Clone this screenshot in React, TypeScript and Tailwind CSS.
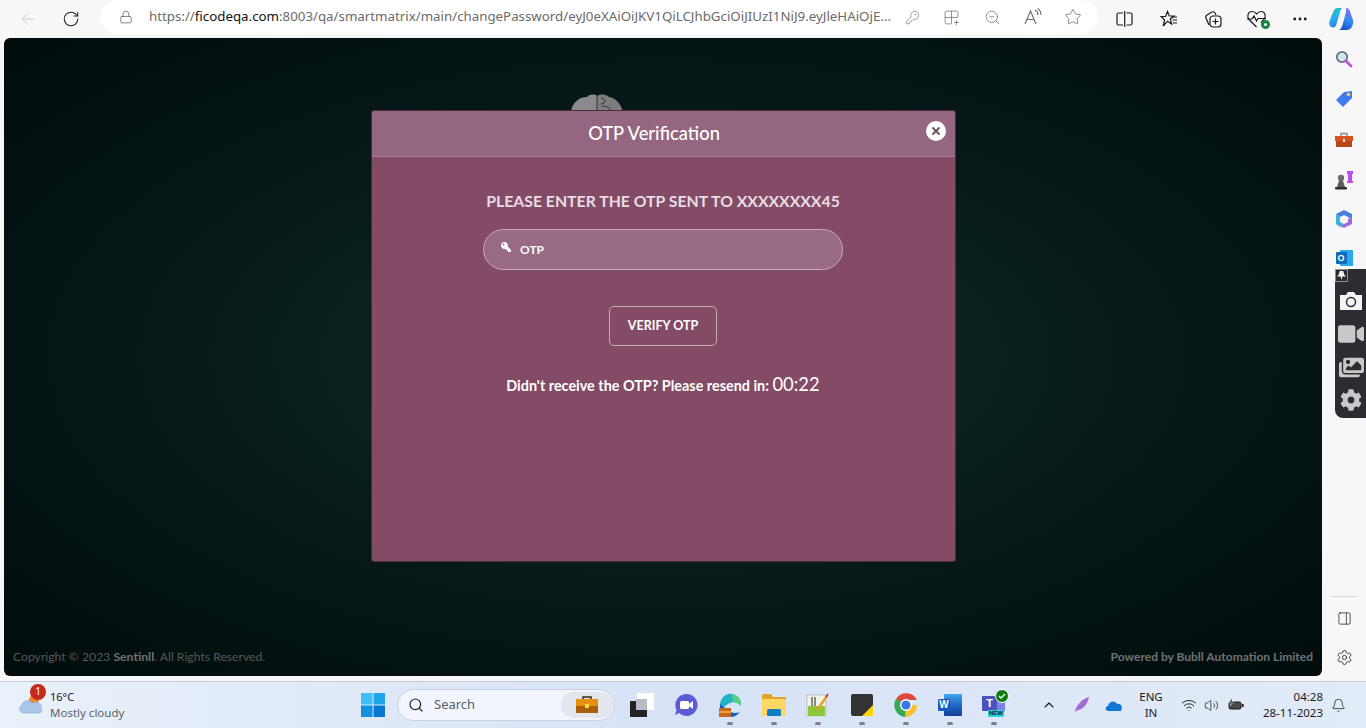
import type { ReactNode } from 'react';
import {
  ArrowLeft, RotateCw, Lock, KeyRound, Grid2x2Plus, ZoomOut, Star, MoreHorizontal,
  Settings, Bell, ChevronUp, Wifi, Volume2, Search, PanelRight, X,
} from 'lucide-react';
import { FaKey, FaVideo, FaImages, FaCog } from 'react-icons/fa';

// Browser toolbar icons on the right side of the address bar
function ReadAloudIcon() {
  return (
    <svg width="20" height="20" viewBox="0 0 20 20" fill="none" stroke="#6b6b6b" strokeWidth="1.1">
      <path d="M2 17 L7.5 4 L13 17 M4 12.5 H11" />
      <path d="M12 3 C14 4 15 5.5 15 8 M14.5 1.5 C17 3 18 5 18 8" />
    </svg>
  );
}

function SplitScreenIcon() {
  return (
    <svg width="17" height="18" viewBox="0 0 17 18" fill="none" stroke="#1a1a1a" strokeWidth="1.2">
      <path d="M7 3 H2.5 Q1 3 1 4.5 V13.5 Q1 15 2.5 15 H7 M10.5 3 H14.5 Q16 3 16 4.5 V13.5 Q16 15 14.5 15 H10.5 M8.7 1 V17" />
    </svg>
  );
}

function FavoritesIcon() {
  return (
    <svg width="18" height="18" viewBox="0 0 18 18" fill="none" stroke="#1a1a1a" strokeWidth="1.2">
      <path d="M7.5 1.5 L9.3 6 H14 L10.3 9 L11.6 14 L7.5 11.2 L3.2 16 L4.6 10 L1 6.5 H5.6 Z" />
      <path d="M11.5 7 H17 M12.5 10 H17 M12.8 13 H17" />
    </svg>
  );
}

function CollectionsIcon() {
  return (
    <svg width="18" height="18" viewBox="0 0 18 18" fill="none" stroke="#1a1a1a" strokeWidth="1.2">
      <path d="M5 15 L2 8 Q1.2 6 3 5 L8 2 Q10 1.2 11 3 L12 5" />
      <rect x="6" y="6" width="11" height="11" rx="3" />
      <path d="M11.5 8.5 V14.5 M8.5 11.5 H14.5" />
    </svg>
  );
}

function CopilotIcon() {
  return (
    <svg width="26" height="26" viewBox="0 0 26 26">
      <defs>
        <linearGradient id="copilot-left" x1="0" y1="0" x2="0.4" y2="1">
          <stop offset="0" stopColor="#1fc4a8" />
          <stop offset="0.55" stopColor="#2bb0ee" />
          <stop offset="1" stopColor="#2b7fe8" />
        </linearGradient>
        <linearGradient id="copilot-right" x1="0.7" y1="0" x2="0.3" y2="1">
          <stop offset="0" stopColor="#8a6cf0" />
          <stop offset="0.5" stopColor="#2f8cf0" />
          <stop offset="1" stopColor="#1f49c7" />
        </linearGradient>
      </defs>
      <path d="M10 2 H14.5 C13 2.5 12.5 4 12 6 L8.5 18 C8 20 7 21.5 5 21.5 C2 21.5 0.5 18 1.5 15 L5.5 5 C6.5 3 8 2 10 2 Z" fill="url(#copilot-left)" />
      <path d="M18 2 C20 2 21.5 3.5 22 5.5 L25 14 C26 18 23.5 24 19 24 H10 C12.5 24 13.5 22 14.5 19 L17.5 8 C18 6 18.5 3.5 18 2 Z" fill="url(#copilot-right)" />
    </svg>
  );
}

function BrowserEssentialsIcon() {
  return (
    <div className="relative h-5 w-6">
      <svg width="22" height="20" viewBox="0 0 22 20" fill="none" stroke="#1a1a1a" strokeWidth="1.2">
        <path d="M10.5 18 L3 10.5 C0.5 7.5 2 2.5 6 2.5 C8 2.5 9.5 3.5 10.5 5 C11.5 3.5 13 2.5 15 2.5 C19 2.5 20.5 7.5 18 10.5 L15 13.5" />
        <path d="M1 10 H6 L8 7 L10.5 12 L12 9.5 H20" />
      </svg>
      <span className="absolute bottom-0 right-0 flex h-[9px] w-[9px] items-center justify-center rounded-full bg-[#16863a]">
        <span className="h-[3px] w-[3px] rounded-full bg-white" />
      </span>
    </div>
  );
}

function TopBar() {
  return (
    <div className="flex h-[38px] shrink-0 items-center bg-[#f7f7f7] font-['Noto_Sans','Open_Sans',sans-serif]">
      <div className="flex w-[100px] shrink-0 items-center">
        <ArrowLeft className="ml-[18px] text-[#c6c6c6]" size={20} strokeWidth={1} />
        <RotateCw className="ml-[24px] text-[#222]" size={18} strokeWidth={1.4} />
      </div>
      <div className="flex h-[34px] w-[998px] shrink-0 -translate-y-[2px] items-center rounded-[17px] bg-white pl-[19px]">
        <Lock className="shrink-0 text-[#555]" size={14} strokeWidth={1.2} />
        <div className="ml-[16px] w-[748px] shrink-0 overflow-hidden whitespace-nowrap text-[13.3px] text-[#6b6b6b]">
          https://<span className="text-[#111]">ficodeqa.com</span>:8003/qa/smartmatrix/main/changePassword/eyJ0eXAiOiJKV1QiLCJhbGciOiJIUzI1NiJ9.eyJleHAiOjE...
        </div>
        <div className="flex items-center">
          <KeyRound className="ml-[8px] text-[#777]" size={15} strokeWidth={1.1} />
          <Grid2x2Plus className="ml-[23px] text-[#666]" size={17} strokeWidth={1} />
          <ZoomOut className="ml-[24px] text-[#666]" size={17} strokeWidth={1} />
          <span className="ml-[22px] flex"><ReadAloudIcon /></span>
          <Star className="ml-[21px] text-[#666]" size={18} strokeWidth={1} />
        </div>
      </div>
      <div className="flex items-center">
        <span className="ml-[18px] flex"><SplitScreenIcon /></span>
        <span className="ml-[27px] flex"><FavoritesIcon /></span>
        <span className="ml-[26px] flex"><CollectionsIcon /></span>
        <span className="ml-[24px] flex"><BrowserEssentialsIcon /></span>
        <MoreHorizontal className="ml-[21px] text-[#1a1a1a]" size={18} strokeWidth={1.8} />
        <span className="ml-[19px] flex"><CopilotIcon /></span>
      </div>
    </div>
  );
}

function SideRail() {
  return (
    <div className="relative flex w-[44px] shrink-0 flex-col items-center bg-[#f7f7f7] pt-[12px]">
      {/* Magnifier */}
      <svg width="18" height="18" viewBox="0 0 18 18">
        <circle cx="7" cy="7" r="5.2" fill="#cfe6f5" stroke="#6b6f75" strokeWidth="1.8" />
        <path d="M11 11 L16 16" stroke="#c74be0" strokeWidth="2.6" strokeLinecap="round" />
      </svg>
      {/* Tag */}
      <svg width="18" height="18" viewBox="0 0 18 18" className="mt-[22px]">
        <path d="M1 10 L9 2 L17 1 L17 8 L8 17 Z" fill="#3f7bf2" />
        <circle cx="13.5" cy="4.5" r="1.8" fill="#ffc83d" />
      </svg>
      {/* Toolbox */}
      <svg width="18" height="16" viewBox="0 0 18 16" className="mt-[24px]">
        <path d="M6 4 V1.5 H12 V4" fill="none" stroke="#8a8a8a" strokeWidth="1.4" />
        <rect x="0" y="4" width="18" height="5" fill="#d8541e" />
        <rect x="1" y="9" width="16" height="6" fill="#b9461a" />
        <rect x="8" y="7" width="2" height="3" fill="#ddd" />
      </svg>
      {/* Chess */}
      <svg width="19" height="20" viewBox="0 0 19 20" className="mt-[22px]">
        <path d="M13 1 H18 V4 H17 V11 H18 V13 H12 V11 H13 V4 H12 V1 Z" fill="#c24bf0" />
        <circle cx="6" cy="8" r="3.2" fill="#6e6e6e" />
        <path d="M4 11 H8 L10 17 H2 Z" fill="#5a5a5a" />
        <rect x="0" y="17" width="12" height="2.5" rx="1" fill="#2e2e2e" />
      </svg>
      {/* M365 */}
      <svg width="18" height="18" viewBox="0 0 18 18" className="mt-[20px]">
        <path d="M9 0 L17 4 V9 L9 5 L5 7 L1 4 Z" fill="#4a7de0" />
        <path d="M1 4 L5 7 V12 L9 14 L5 17 L1 14 Z" fill="#39b3d8" />
        <path d="M17 7 V14 L9 18 L5 16 L13 12 V9 Z" fill="#a968d8" />
      </svg>
      {/* Outlook */}
      <div className="relative mt-[22px] h-[17px] w-[17px]">
        <div className="absolute right-0 top-0 h-[16px] w-[13px] rounded-[1px] bg-[#28a8ea]" />
        <div className="absolute left-0 top-[2px] flex h-[12px] w-[11px] items-center justify-center rounded-[1px] bg-[#0f6cbd] font-['Liberation_Sans',sans-serif] text-[9px] font-bold leading-none text-white">
          O
        </div>
      </div>

      <div className="flex-1" />
      <div className="mb-[14px] w-[28px] border-t border-[#d9d9d9]" />
      <PanelRight className="mb-[23px] text-[#333]" size={15} strokeWidth={1.3} />
      <Settings className="mb-[10px] text-[#222]" size={17} strokeWidth={1.2} />

      {/* Screen-capture extension floating over the rail */}
      <div className="absolute left-[13px] top-[231px] flex h-[149px] w-[31px] flex-col items-center rounded-bl-[8px] bg-[#2b2d33] pl-[1px]">
        <div className="absolute left-0 top-0 flex h-[13px] w-[13px] items-center justify-center border border-[#8c8c8c] bg-[#2b2d33]">
          <svg width="9" height="9" viewBox="0 0 10 10">
            <path d="M3 0 H7 L8 4 L10 6 H6 L5 10 L4 6 H0 L2 4 Z" fill="#f2f2f2" />
          </svg>
        </div>
        <svg width="24" height="20" viewBox="0 0 24 20" className="mt-[22px]">
          <path d="M1 4 H7 L9 1 H15 L17 4 H23 V19 H1 Z" fill="#f4f4f4" />
          <circle cx="12" cy="11" r="4.5" fill="none" stroke="#2b2d33" strokeWidth="1.5" />
        </svg>
        <FaVideo className="mt-[10px] text-[#c9c9c9]" size={26} />
        <FaImages className="mt-[8px] text-[#c9c9c9]" size={25} />
        <FaCog className="mt-[9px] text-[#c9c9c9]" size={22} />
      </div>
    </div>
  );
}

function OtpModal() {
  return (
    <div className="relative mx-auto mt-[72px] flex h-[452px] w-[585px] flex-col rounded-[3px] border border-[#4a2a3c] bg-[#834b66] font-['Lato','Open_Sans',sans-serif] text-white">
      <div className="flex h-[46px] shrink-0 items-center justify-center rounded-t-[3px] border-b border-[#a97f95] bg-[#95667f] pr-[18px]">
        <h2 className="text-[18.3px] font-medium">OTP Verification</h2>
        <button className="absolute right-[9px] top-[10px] flex h-[20px] w-[20px] items-center justify-center rounded-full bg-white text-[#6e5564]">
          <X size={12} strokeWidth={4} />
        </button>
      </div>
      <p className="mt-[34px] text-center text-[15.8px] font-bold leading-5 text-[#e8dde3]">
        PLEASE ENTER THE OTP SENT TO XXXXXXXX45
      </p>
      <div className="mx-auto mt-[18px] flex h-[41px] w-[360px] items-center rounded-[21px] border border-[#c7a9b9] bg-[#996a83] pl-[17px]">
        <FaKey className="-mt-[6px] -scale-x-100 text-white" size={10} />
        <span className="ml-[9px] text-[12px] font-bold">OTP</span>
      </div>
      <button className="mx-auto mt-[36px] h-[40px] w-[108px] rounded-[5px] border border-[#c7a9b9] text-[12.5px] font-bold">
        VERIFY OTP
      </button>
      <p className="mt-[26px] text-center text-[14.4px] font-bold leading-[24px]">
        Didn't receive the OTP? Please resend in: <span className="text-[18.4px] font-normal">00:22</span>
      </p>
    </div>
  );
}

function PageArea() {
  return (
    <div className="relative flex flex-1 flex-col overflow-hidden rounded-[6px] bg-[#041010] bg-[radial-gradient(ellipse_at_center,#0d2f2a_0%,#061a19_50%,#020c0c_100%)]">
      {/* Logo peeking out above the modal */}
      <svg width="58" height="18" viewBox="0 0 56 18" className="absolute left-[564px] top-[56px]">
        <path d="M2 18 C3 9 10 3 18 3 C21 0 26 0 28 2 V18 Z" fill="#8a8a8a" />
        <path d="M28 18 V2 C33 -1 38 1 40 3 C47 4 52 10 54 18 Z" fill="#7d7d7d" />
        <path d="M28 2 V18 M32 4 C37 4 37 10 32 10 M33 12 C38 12 42 14 42 18" fill="none" stroke="#2b3140" strokeWidth="1" />
      </svg>
      <OtpModal />
      <div className="mt-auto flex h-[38px] shrink-0 items-start justify-between px-[9px] pt-[10px] font-['Lato','Open_Sans',sans-serif] text-[#555859]">
        <span className="text-[12.2px]">Copyright © 2023 <b className="text-[#6f7272]">Sentinll</b>. All Rights Reserved.</span>
        <span className="text-[12px] font-bold text-[#6f7272]">Powered by Bubll Automation Limited</span>
      </div>
    </div>
  );
}

function TaskIcon({ children, dot = true }: { children: ReactNode; dot?: boolean }) {
  return (
    <div className="relative flex h-[40px] w-[44px] shrink-0 items-center justify-center">
      {children}
      {dot && <span className="absolute bottom-0 left-[19px] h-[3px] w-[6px] rounded-full bg-[#7c8088]" />}
    </div>
  );
}

function Taskbar() {
  return (
    <div className="flex h-[47px] shrink-0 items-center border-t border-[#c8ccd4] bg-[linear-gradient(90deg,#e9f1fa_0%,#d7e2f7_50%,#e2ebf8_100%)] font-['Noto_Sans','Open_Sans',sans-serif]">
      {/* Weather */}
      <div className="relative flex w-[361px] shrink-0 items-center pl-[50px]">
        <svg width="26" height="20" viewBox="0 0 26 20" className="absolute left-[18px] top-[4px]">
          <circle cx="16" cy="6" r="5" fill="#f08a24" />
          <path d="M6 19 C1 19 0 13 4 11 C5 6 12 5 14 9 C19 6 25 11 23 15 C25 17 23 19 21 19 Z" fill="#a9c6ea" stroke="#7fa4d4" strokeWidth="0.5" />
        </svg>
        <span className="absolute left-[30px] -top-[6px] flex h-[16px] w-[16px] items-center justify-center rounded-full bg-[#c42b1c] text-[10px] text-white">1</span>
        <div className="-mt-[1px] leading-[16px]">
          <div className="text-[11px] text-[#1a1a1a]">16°C</div>
          <div className="text-[11.5px] text-[#5c5f66]">Mostly cloudy</div>
        </div>
      </div>
      {/* Start */}
      <svg width="24" height="24" viewBox="0 0 24 24" className="mr-[12px] shrink-0">
        <rect x="0" y="0" width="11.5" height="11.5" fill="#3cc0f5" />
        <rect x="12.5" y="0" width="11.5" height="11.5" fill="#20a4ec" />
        <rect x="0" y="12.5" width="11.5" height="11.5" fill="#1490e0" />
        <rect x="12.5" y="12.5" width="11.5" height="11.5" fill="#0878d4" />
      </svg>
      {/* Search */}
      <div className="flex h-[32px] w-[218px] shrink-0 items-center rounded-[16px] border border-[#c9d0e2] bg-[#f1f5fd] pl-[10px]">
        <Search className="text-[#222]" size={16} strokeWidth={1.8} />
        <span className="ml-[10px] text-[13px] text-[#5c5f66]">Search</span>
        <span className="ml-auto mr-[1px] flex h-[26px] w-[52px] items-center justify-center rounded-[13px] bg-[#e3e6ed]">
          <svg width="22" height="18" viewBox="0 0 22 18">
            <path d="M7 4 V1 H15 V4" fill="none" stroke="#3a2a10" strokeWidth="1.5" />
            <rect x="0" y="3" width="22" height="8" fill="#e88f12" />
            <rect x="0" y="10" width="22" height="7" fill="#a8600c" />
            <rect x="9" y="8" width="4" height="4" fill="#ffd83d" />
          </svg>
        </span>
      </div>
      {/* Pinned apps */}
      <div className="ml-[5px] flex items-center">
        <TaskIcon dot={false}>
          <div className="relative h-[24px] w-[24px]">
            <div className="absolute right-0 top-0 h-[17px] w-[17px] bg-white" />
            <div className="absolute bottom-0 left-0 h-[16px] w-[17px] bg-[#222]" />
            <div className="absolute left-[6px] top-[6px] h-[11px] w-[11px] bg-[#b8bcc4]" />
          </div>
        </TaskIcon>
        <TaskIcon dot={false}>
          <svg width="24" height="24" viewBox="0 0 24 24">
            <path d="M12 1 A11 11 0 1 1 5 20 L1 22 L2.5 17 A11 11 0 0 1 12 1 Z" fill="#5b5bd6" />
            <rect x="6" y="8" width="9" height="8" rx="1.5" fill="#fff" />
            <path d="M15 11 L19 8 V16 L15 13 Z" fill="#fff" />
          </svg>
        </TaskIcon>
        <TaskIcon>
          <svg width="24" height="24" viewBox="0 0 24 24">
            <path d="M2 11 C3 3 10 0 14 1 C20 2 24 7 23 13 C20 9 14 8 10 11 C7 13 5 16 2 11 Z" fill="#1fb5c9" />
            <path d="M14 1 C20 2 24 7 23 13 C21 10 18 9 15 9 Z" fill="#5ad17a" />
            <path d="M2 11 C1 17 5 24 12 24 C16 24 20 22 22 19 C18 21 13 20 10 17 Z" fill="#0f62c4" />
            <rect x="1" y="15" width="12" height="9" fill="#c8691a" />
            <rect x="1" y="18" width="12" height="2" fill="#e8a23c" />
          </svg>
        </TaskIcon>
        <TaskIcon>
          <svg width="24" height="22" viewBox="0 0 24 22">
            <path d="M0 2 Q0 0 2 0 H9 L11 3 H24 V6 H0 Z" fill="#e0a526" />
            <rect x="0" y="5" width="24" height="17" rx="1.5" fill="#ffd761" />
            <rect x="5" y="15" width="14" height="7" rx="1.5" fill="#0f7cc4" />
          </svg>
        </TaskIcon>
        <TaskIcon>
          <svg width="24" height="24" viewBox="0 0 24 24">
            <rect x="1" y="2" width="19" height="22" fill="#f2f4ea" stroke="#b5b8ac" strokeWidth="0.8" />
            <rect x="2" y="13" width="17" height="10" fill="#8ac73a" />
            <path d="M6 4 V13 M9 4 V13" stroke="#444" strokeWidth="1.2" />
            <path d="M11 17 L21 3" stroke="#e8a020" strokeWidth="2.4" />
            <path d="M20 4 L22 1" stroke="#b03a2a" strokeWidth="1.6" />
          </svg>
        </TaskIcon>
        <TaskIcon>
          <div className="relative h-[22px] w-[22px] rounded-[2px] bg-[#333]">
            <svg width="11" height="11" viewBox="0 0 11 11" className="absolute bottom-0 right-0">
              <path d="M11 0 V11 H0 Z" fill="#ffd400" />
            </svg>
          </div>
        </TaskIcon>
        <TaskIcon>
          <svg width="24" height="24" viewBox="0 0 24 24">
            <path d="M12 12 L2 6 A12 12 0 0 1 23 7 H12 Z" fill="#dd4a3c" />
            <path d="M12 12 H23 A12 12 0 0 1 11 24 Z" fill="#fbc02d" />
            <path d="M12 12 L11 24 A12 12 0 0 1 2 6 Z" fill="#34a853" />
            <circle cx="12" cy="12" r="6" fill="#fff" />
            <circle cx="12" cy="12" r="4.6" fill="#3b78e7" />
          </svg>
        </TaskIcon>
        <TaskIcon>
          <div className="relative h-[22px] w-[24px]">
            <div className="absolute right-0 top-0 h-[22px] w-[18px] rounded-[1px] bg-[linear-gradient(180deg,#41a5ee_0%,#2b7cd3_33%,#185abd_66%,#103f91_100%)]" />
            <div className="absolute left-0 top-[5px] flex h-[12px] w-[12px] items-center justify-center rounded-[1px] bg-[#185abd] font-['Liberation_Sans',sans-serif] text-[10px] font-bold leading-none text-white">
              W
            </div>
          </div>
        </TaskIcon>
        <TaskIcon>
          <div className="relative h-[24px] w-[26px]">
            <div className="absolute right-[2px] top-[4px] h-[15px] w-[12px] rounded-[2px] bg-[#7b83eb]" />
            <div className="absolute left-[1px] top-[3px] flex h-[15px] w-[15px] items-center justify-center rounded-[1px] bg-[#4b53bc] font-['Liberation_Sans',sans-serif] text-[11px] font-bold leading-none text-white">
              T
            </div>
            <div className="absolute bottom-0 left-[7px] h-[7px] rounded-[1px] bg-[#25d6d6] px-[1px] font-['Liberation_Sans',sans-serif] text-[6px] font-bold leading-[7px] text-[#102020]">
              NEW
            </div>
            <div className="absolute -right-[2px] -top-[4px] flex h-[14px] w-[14px] items-center justify-center rounded-full border border-white bg-[#107c10]">
              <svg width="8" height="8" viewBox="0 0 8 8">
                <path d="M1 4 L3 6 L7 2" fill="none" stroke="#fff" strokeWidth="1.3" />
              </svg>
            </div>
          </div>
        </TaskIcon>
      </div>
      {/* Tray */}
      <div className="ml-auto flex items-center text-[#1a1a1a]">
        <ChevronUp size={16} strokeWidth={1.6} />
        <svg width="18" height="18" viewBox="0 0 18 18" className="ml-[16px]">
          <path d="M2 16 C3 9 9 3 16 1 C15 7 11 13 5 14 L2 16 Z" fill="#a06cd5" />
        </svg>
        <svg width="18" height="12" viewBox="0 0 18 12" className="ml-[14px]">
          <path d="M3 12 C0 12 0 7 3 7 C4 2 10 1 12 5 C16 4 18 8 16 12 Z" fill="#0f78d4" />
        </svg>
        <div className="ml-[16px] w-[24px] text-center text-[11.5px] leading-[16px]">
          <div>ENG</div>
          <div>IN</div>
        </div>
        <Wifi className="ml-[18px]" size={16} strokeWidth={1.4} />
        <Volume2 className="ml-[7px]" size={15} strokeWidth={1.2} />
        <svg width="17" height="14" viewBox="0 0 17 14" className="ml-[8px]">
          <rect x="2" y="4" width="12" height="7" rx="1.5" fill="#4a4a4a" stroke="#1a1a1a" />
          <rect x="15" y="6" width="1.6" height="3" fill="#1a1a1a" />
          <path d="M5 0 L2 4.5 H4.5 L3 8 L7 3.5 H4.8 Z" fill="#1a1a1a" stroke="#e9f1fa" strokeWidth="0.5" />
        </svg>
        <div className="ml-[17px] w-[62px] text-right text-[11.5px] leading-[16px]">
          <div>04:28</div>
          <div>28-11-2023</div>
        </div>
        <Bell className="ml-[8px] mr-[20px]" size={15} strokeWidth={1.2} />
      </div>
    </div>
  );
}

export default function App() {
  return (
    <div className="flex h-[728px] w-[1366px] flex-col overflow-hidden bg-[#f7f7f7]">
      <TopBar />
      <div className="flex h-[638px] shrink-0 pl-[4px]">
        <PageArea />
        <SideRail />
      </div>
      <div className="flex-1" />
      <Taskbar />
    </div>
  );
}
